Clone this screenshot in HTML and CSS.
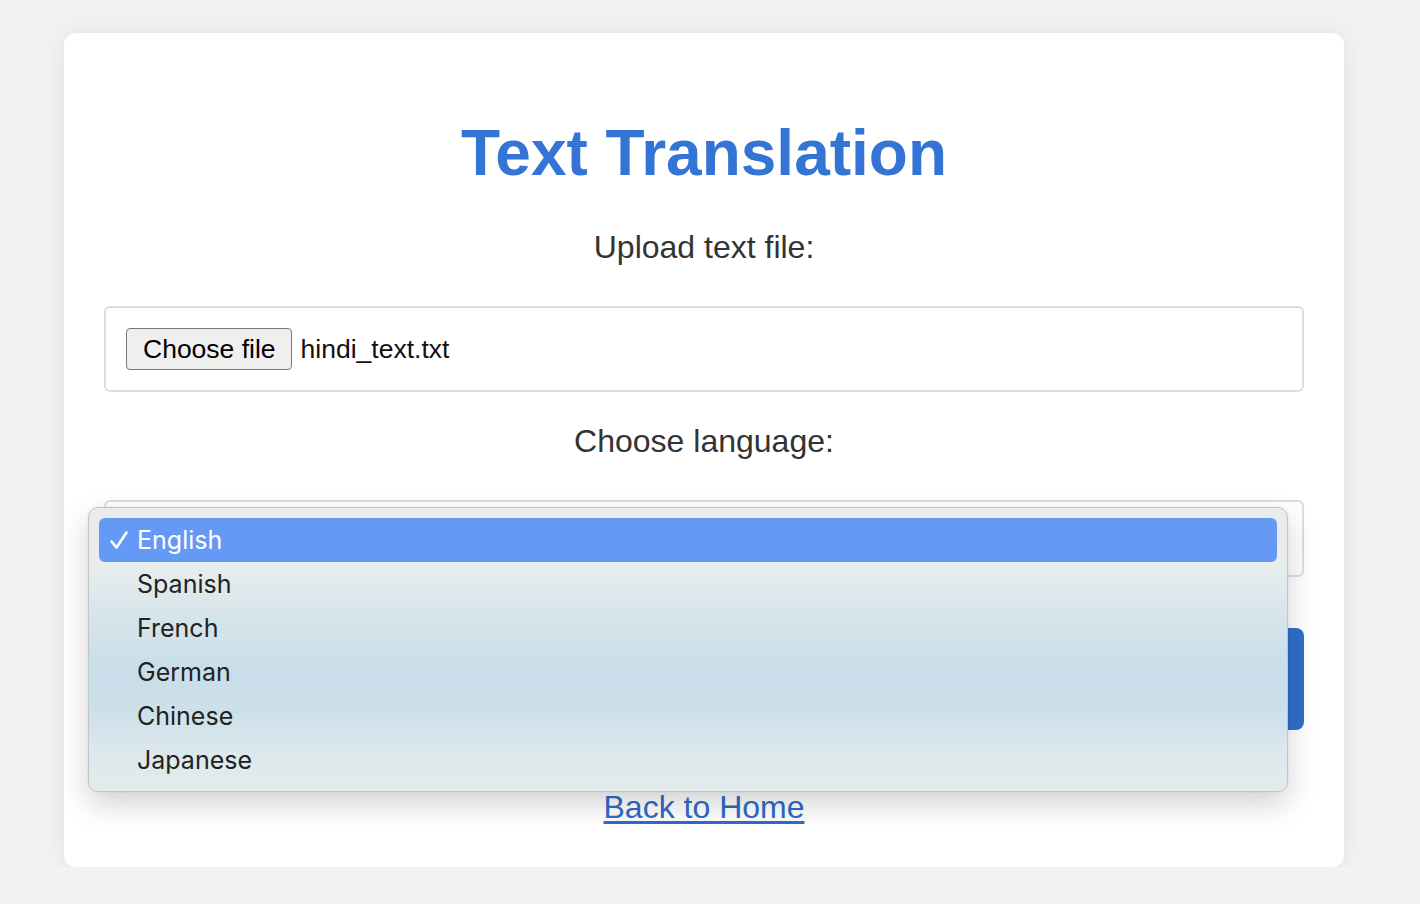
FILE: index.html
```html
<!DOCTYPE html>
<html lang="en">
<head>
<meta charset="utf-8">
<title>Text Translation</title>
<link rel="stylesheet" href="styles.css">
</head>
<body>
<main class="card">
  <h1 class="title">Text Translation</h1>
  <form class="form">
    <label class="label label-upload">Upload text file:</label>
    <div class="file-box">
      <span class="file-btn">Choose file</span>
      <span class="file-name">hindi_text.txt</span>
    </div>
    <label class="label label-lang">Choose language:</label>
    <div class="select-wrap">
      <div class="select">
        <span class="select-value">English</span>
        <svg class="chev" width="14" height="14" viewBox="0 0 14 14"><path d="M2 9 L7 13 L12 5" fill="none" stroke="#111" stroke-width="1.6"/></svg>
      </div>
      <ul class="menu">
        <li class="item active"><svg class="check" width="20" height="20" viewBox="0 0 20 20"><path d="M2.5 11.5 L7.5 17.5 L17.5 2.5" fill="none" stroke="#fff" stroke-width="2.6" stroke-linecap="round" stroke-linejoin="round"/></svg><span>English</span></li>
        <li class="item"><span>Spanish</span></li>
        <li class="item"><span>French</span></li>
        <li class="item"><span>German</span></li>
        <li class="item"><span>Chinese</span></li>
        <li class="item"><span>Japanese</span></li>
      </ul>
    </div>
    <button type="button" class="submit">Translate</button>
  </form>
  <a class="back" href="#">Back to Home</a>
</main>
</body>
</html>
```

FILE: styles.css
```css
html, body {
  margin: 0;
  padding: 0;
}
body {
  background: #f2f2f2;
  font-family: "Liberation Sans", Arial, sans-serif;
  color: #333;
}
.card {
  width: 1280px;
  box-sizing: border-box;
  margin: 33px 0 0 64px;
  padding: 40px 40px 42px;
  background: #fff;
  border-radius: 12px;
  box-shadow: 0 0 24px rgba(0,0,0,0.07);
  display: flex;
  flex-direction: column;
  align-items: center;
}
.title {
  margin: 43px 0 0;
  font-size: 64px;
  line-height: 74px;
  font-weight: bold;
  color: #3474d4;
  text-align: center;
}
.form {
  width: 100%;
  display: flex;
  flex-direction: column;
  align-items: center;
}
.label {
  font-size: 32px;
  line-height: 36px;
  color: #333;
}
.label-upload { margin-top: 39px; }
.label-lang { margin-top: 31px; }
.file-box {
  width: 100%;
  box-sizing: border-box;
  margin-top: 41px;
  height: 86px;
  border: 2px solid #dddddd;
  border-radius: 6px;
  padding: 20px;
  display: flex;
  align-items: center;
  gap: 9px;
  font-size: 26.5px;
}
.file-btn {
  height: 42px;
  box-sizing: border-box;
  border: 1px solid #767676;
  border-radius: 4px;
  background: #efefef;
  padding: 0 15px 0 16px;
  display: flex;
  align-items: center;
  color: #000;
}
.file-name { color: #111; }
.select-wrap {
  width: 100%;
  margin-top: 41px;
  position: relative;
}
.select {
  height: 77px;
  box-sizing: border-box;
  border: 2px solid #dddddd;
  border-radius: 6px;
  padding: 0 14px 0 20px;
  display: flex;
  align-items: center;
  justify-content: space-between;
  font-size: 26.5px;
  color: #111;
}
.chev { margin-top: -2px; }
.menu {
  position: absolute;
  left: -16px;
  top: 7px;
  width: 1200px;
  height: 285px;
  box-sizing: border-box;
  margin: 0;
  padding: 10px 10px;
  list-style: none;
  border: 1px solid #c4c4c4;
  border-radius: 10px;
  background: linear-gradient(to bottom, #ebebeb 0%, #e8eded 20%, #d6e5eb 38%, #c9deea 58%, #cde0ea 72%, #dce8ec 86%, #e3ecec 100%);
  box-shadow: 0 12px 30px rgba(0,0,0,0.18), 0 0 2px rgba(0,0,0,0.1);
  font-family: Inter, "Noto Sans", sans-serif;
  font-size: 25px;
  color: #222;
}
.item {
  height: 44px;
  display: flex;
  align-items: center;
  padding-left: 38px;
  border-radius: 6px;
}
.item.active {
  background: #6499f6;
  color: #fff;
  padding-left: 10px;
}
.check {
  flex: none;
  width: 20px;
  height: 20px;
  margin-right: 8px;
}
.submit {
  width: 100%;
  height: 102px;
  margin-top: 51px;
  border: none;
  border-radius: 8px;
  background: #2f6fcb;
  color: #fff;
  font-family: "Liberation Sans", Arial, sans-serif;
  font-size: 31.5px;
}
.back {
  margin-top: 59px;
  font-size: 32px;
  line-height: 36px;
  color: #2f6bc9;
  text-decoration: underline;
  text-underline-offset: 3px;
}
```
